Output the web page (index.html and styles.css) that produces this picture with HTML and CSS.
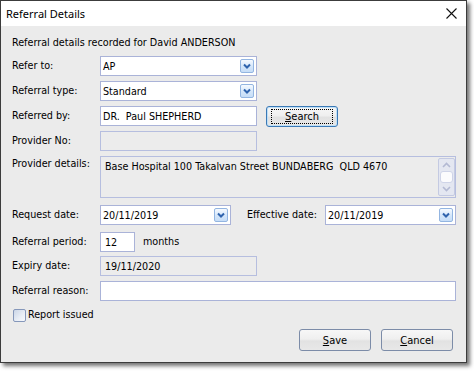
FILE: index.html
```html
<!DOCTYPE html>
<html>
<head>
<meta charset="utf-8">
<title>Referral Details</title>
<link rel="stylesheet" href="styles.css">
</head>
<body>
<div class="window">
  <div class="titlebar">
    <span class="title">Referral Details</span>
    <svg class="close" width="11" height="11" viewBox="0 0 11 11"><path d="M0.5 0.5L10.5 10.5M10.5 0.5L0.5 10.5" stroke="#111" stroke-width="1.1" fill="none"/></svg>
  </div>
  <div class="content">
    <div class="intro">Referral details recorded for David ANDERSON</div>

    <div class="row r-first">
      <span class="lbl">Refer to:</span>
      <div class="field combo w-short"><span class="val">AP</span><span class="dd"><svg width="12" height="12" viewBox="0 0 12 12"><path d="M3 4.5L6 7.5L9 4.5" stroke="#2f63ad" stroke-width="2" fill="none"/></svg></span></div>
    </div>

    <div class="row">
      <span class="lbl">Referral type:</span>
      <div class="field combo w-short"><span class="val">Standard</span><span class="dd"><svg width="12" height="12" viewBox="0 0 12 12"><path d="M3 4.5L6 7.5L9 4.5" stroke="#2f63ad" stroke-width="2" fill="none"/></svg></span></div>
    </div>

    <div class="row">
      <span class="lbl">Referred by:</span>
      <div class="field w-short"><span class="val">DR.&nbsp; Paul SHEPHERD</span></div>
      <button class="btn btn-default btn-search"><span class="focus"><u>S</u>earch</span></button>
    </div>

    <div class="row">
      <span class="lbl">Provider No:</span>
      <div class="field disabled w-short"></div>
    </div>

    <div class="row r-memo">
      <span class="lbl lbl-top">Provider details:</span>
      <div class="field disabled memo w-long">
        <div class="memo-text">Base Hospital 100 Takalvan Street BUNDABERG&nbsp; QLD 4670</div>
        <div class="scrollbar">
          <div class="sb-btn"><svg width="9" height="6" viewBox="0 0 9 6"><path d="M1 5L4.5 1.5L8 5" stroke="#b3b9d3" stroke-width="1.6" fill="none"/></svg></div>
          <div class="sb-thumb"></div>
          <div class="sb-btn"><svg width="9" height="6" viewBox="0 0 9 6"><path d="M1 1L4.5 4.5L8 1" stroke="#b3b9d3" stroke-width="1.6" fill="none"/></svg></div>
        </div>
      </div>
    </div>

    <div class="row r-gap7">
      <span class="lbl">Request date:</span>
      <div class="field combo w-date"><span class="val">20/11/2019</span><span class="dd"><svg width="12" height="12" viewBox="0 0 12 12"><path d="M3 4.5L6 7.5L9 4.5" stroke="#2f63ad" stroke-width="2" fill="none"/></svg></span></div>
      <span class="lbl-eff">Effective date:</span>
      <div class="field combo w-date"><span class="val">20/11/2019</span><span class="dd"><svg width="12" height="12" viewBox="0 0 12 12"><path d="M3 4.5L6 7.5L9 4.5" stroke="#2f63ad" stroke-width="2" fill="none"/></svg></span></div>
    </div>

    <div class="row r-gap7">
      <span class="lbl">Referral period:</span>
      <div class="field w-num"><span class="val val-num">12</span></div>
      <span class="unit">months</span>
    </div>

    <div class="row r-gap4">
      <span class="lbl">Expiry date:</span>
      <div class="field disabled w-short"><span class="val val-num">19/11/2020</span></div>
    </div>

    <div class="row">
      <span class="lbl">Referral reason:</span>
      <div class="field w-long"></div>
    </div>

    <div class="check-row">
      <span class="checkbox"></span>
      <span class="check-lbl">Report issued</span>
    </div>

    <div class="btn-row">
      <button class="btn"><u>S</u>ave</button>
      <button class="btn"><u>C</u>ancel</button>
    </div>
  </div>
</div>
</body>
</html>
```

FILE: styles.css
```css
html, body {
  margin: 0;
  padding: 0;
  background: #ffffff;
}

body {
  width: 474px;
  height: 371px;
  overflow: hidden;
  font-family: "DejaVu Sans Condensed", "Liberation Sans", sans-serif;
  font-size: 10.7px;
  color: #000;
}

.window {
  width: 467px;
  height: 363px;
  box-sizing: border-box;
  border: 1px solid #3c3c3c;
  background: #ebebeb;
  box-shadow: 3px 3px 4px rgba(0, 0, 0, 0.55);
}

.titlebar {
  height: 25px;
  background: #ffffff;
  display: flex;
  align-items: center;
  justify-content: space-between;
  padding: 0 9px 0 5px;
}

.title {
  font-family: "Noto Sans", "Open Sans", sans-serif;
  font-size: 11px;
  color: #000;
}

.close {
  display: block;
}

.content {
  padding: 10px 11px 0 11px;
}

.intro {
  line-height: 14px;
  height: 14px;
}

.row {
  display: flex;
  align-items: flex-start;
  height: 20px;
  margin-top: 5px;
}

.r-first { margin-top: 6px; }
.r-gap7 { margin-top: 7px; }
.r-gap4 { margin-top: 4px; }

.lbl {
  width: 88px;
  flex: none;
  line-height: 20px;
}

.lbl-top {
  line-height: 14px;
  margin-top: 1px;
}

.field {
  box-sizing: border-box;
  height: 20px;
  border: 1px solid #aab3d8;
  background: #ffffff;
  display: flex;
  align-items: center;
  flex: none;
}

.field.disabled {
  background: #ececec;
  border-color: #b6bedf;
}

.w-short { width: 157px; }
.w-long { width: 356px; }
.w-date { width: 131px; }
.w-num { width: 35px; }

.val {
  padding-left: 2px;
  white-space: nowrap;
  flex: 1;
}

.val-num { padding-left: 4px; }

.combo .dd {
  width: 14px;
  height: 14px;
  box-sizing: border-box;
  margin-right: 2px;
  border: 1px solid #93b5e1;
  border-radius: 2px;
  background: linear-gradient(#f6faff, #d4e6fa 55%, #c6ddf7);
  display: flex;
  align-items: center;
  justify-content: center;
  flex: none;
}

.combo .dd svg { display: block; }

.lbl-eff {
  margin-left: 16px;
  width: 78px;
  flex: none;
  line-height: 20px;
}

.unit {
  margin-left: 8px;
  line-height: 20px;
}

.btn {
  box-sizing: border-box;
  width: 72px;
  height: 22px;
  border: 1px solid #7c8ca8;
  border-radius: 3px;
  background: linear-gradient(#f7f7f7, #efefef 45%, #e2e2e2 55%, #e8e8e8);
  font-family: inherit;
  font-size: 11px;
  color: #000;
  padding: 0;
  display: flex;
  align-items: center;
  justify-content: center;
}

.btn-search {
  margin-left: 9px;
  height: 21px;
}

.btn-default {
  border-color: #3b79b6;
  box-shadow: inset 0 0 0 1px #bfe0f7;
}

.focus {
  box-sizing: border-box;
  width: 62px;
  height: 15px;
  border: 1px dotted #000;
  display: flex;
  align-items: center;
  justify-content: center;
}

.r-memo {
  height: 42px;
}

.memo {
  height: 42px;
  align-items: stretch;
}

.memo-text {
  flex: 1;
  padding: 3px 0 0 4px;
  line-height: 14px;
  white-space: nowrap;
}

.scrollbar {
  width: 17px;
  box-sizing: border-box;
  margin: 1px 0;
  border: 1px solid #c4cae2;
  border-radius: 2px;
  background: #e4e7f1;
  display: flex;
  flex-direction: column;
}

.sb-btn {
  height: 12px;
  display: flex;
  align-items: center;
  justify-content: center;
}

.sb-btn svg { display: block; }

.sb-thumb {
  height: 13px;
  margin: 0 1px;
  border: 1px solid #cfd4e8;
  border-radius: 3px;
  background: #fbfbfd;
  box-sizing: border-box;
}

.check-row {
  display: flex;
  align-items: center;
  height: 14px;
  margin-top: 7px;
  padding-left: 1px;
}

.checkbox {
  width: 13px;
  height: 13px;
  box-sizing: border-box;
  border: 1px solid #8597ba;
  border-radius: 2px;
  background: linear-gradient(135deg, #cbd6e7, #e9eef6 60%, #f7f9fc);
  flex: none;
}

.check-lbl {
  margin-left: 2px;
  line-height: 14px;
}

.btn-row {
  display: flex;
  justify-content: flex-end;
  gap: 10px;
  margin-top: 7px;
  margin-right: 2px;
}
```
